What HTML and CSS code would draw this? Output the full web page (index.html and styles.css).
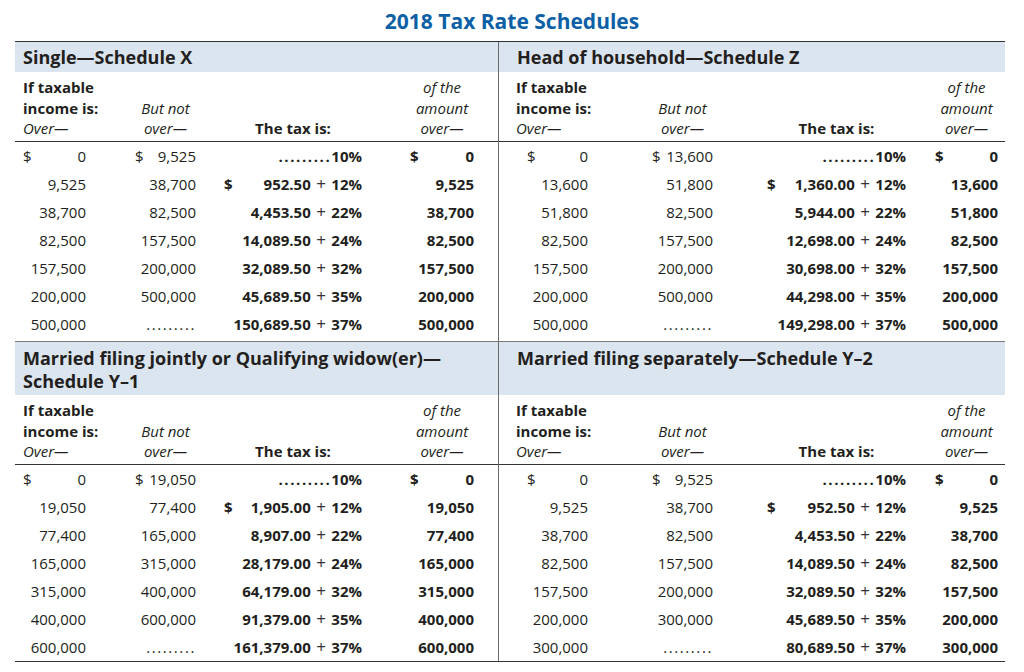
FILE: index.html
```html
<!DOCTYPE html>
<html lang="en">
<head>
<meta charset="utf-8">
<title>2018 Tax Rate Schedules</title>
<link rel="stylesheet" href="styles.css">
</head>
<body>
<h1 class="title">2018 Tax Rate Schedules</h1>
<div class="schedules">

  <section class="sched left upper">
    <h2 class="band">Single—Schedule X</h2>
    <div class="grid heads">
      <div class="h c1"><b>If taxable<br>income is:</b><br><i>Over—</i></div>
      <div class="h c2"><i>But not<br>over—</i></div>
      <div class="h c3"><b>The tax is:</b></div>
      <div class="h c4"><i>of the<br>amount<br>over—</i></div>
    </div>
    <div class="grid rows">
      <div class="n c1"><span>$</span><span class="v">0</span></div>
      <div class="n c2"><span>$</span><span class="v">9,525</span></div>
      <div class="n c3 b"><span class="v"><span class="dots">.........</span>10%</span></div>
      <div class="n c4 b"><span>$</span><span class="v">0</span></div>

      <div class="n c1"><span class="v">9,525</span></div>
      <div class="n c2"><span class="v">38,700</span></div>
      <div class="n c3 b"><span>$</span><span class="v">952.50<span class="op"> + </span>12%</span></div>
      <div class="n c4 b"><span class="v">9,525</span></div>

      <div class="n c1"><span class="v">38,700</span></div>
      <div class="n c2"><span class="v">82,500</span></div>
      <div class="n c3 b"><span class="v">4,453.50<span class="op"> + </span>22%</span></div>
      <div class="n c4 b"><span class="v">38,700</span></div>

      <div class="n c1"><span class="v">82,500</span></div>
      <div class="n c2"><span class="v">157,500</span></div>
      <div class="n c3 b"><span class="v">14,089.50<span class="op"> + </span>24%</span></div>
      <div class="n c4 b"><span class="v">82,500</span></div>

      <div class="n c1"><span class="v">157,500</span></div>
      <div class="n c2"><span class="v">200,000</span></div>
      <div class="n c3 b"><span class="v">32,089.50<span class="op"> + </span>32%</span></div>
      <div class="n c4 b"><span class="v">157,500</span></div>

      <div class="n c1"><span class="v">200,000</span></div>
      <div class="n c2"><span class="v">500,000</span></div>
      <div class="n c3 b"><span class="v">45,689.50<span class="op"> + </span>35%</span></div>
      <div class="n c4 b"><span class="v">200,000</span></div>

      <div class="n c1"><span class="v">500,000</span></div>
      <div class="n c2"><span class="v dots">.........</span></div>
      <div class="n c3 b"><span class="v">150,689.50<span class="op"> + </span>37%</span></div>
      <div class="n c4 b"><span class="v">500,000</span></div>
    </div>
  </section>

  <section class="sched right upper">
    <h2 class="band">Head of household—Schedule Z</h2>
    <div class="grid heads">
      <div class="h c1"><b>If taxable<br>income is:</b><br><i>Over—</i></div>
      <div class="h c2"><i>But not<br>over—</i></div>
      <div class="h c3"><b>The tax is:</b></div>
      <div class="h c4"><i>of the<br>amount<br>over—</i></div>
    </div>
    <div class="grid rows">
      <div class="n c1"><span>$</span><span class="v">0</span></div>
      <div class="n c2"><span>$</span><span class="v">13,600</span></div>
      <div class="n c3 b"><span class="v"><span class="dots">.........</span>10%</span></div>
      <div class="n c4 b"><span>$</span><span class="v">0</span></div>

      <div class="n c1"><span class="v">13,600</span></div>
      <div class="n c2"><span class="v">51,800</span></div>
      <div class="n c3 b"><span>$</span><span class="v">1,360.00<span class="op"> + </span>12%</span></div>
      <div class="n c4 b"><span class="v">13,600</span></div>

      <div class="n c1"><span class="v">51,800</span></div>
      <div class="n c2"><span class="v">82,500</span></div>
      <div class="n c3 b"><span class="v">5,944.00<span class="op"> + </span>22%</span></div>
      <div class="n c4 b"><span class="v">51,800</span></div>

      <div class="n c1"><span class="v">82,500</span></div>
      <div class="n c2"><span class="v">157,500</span></div>
      <div class="n c3 b"><span class="v">12,698.00<span class="op"> + </span>24%</span></div>
      <div class="n c4 b"><span class="v">82,500</span></div>

      <div class="n c1"><span class="v">157,500</span></div>
      <div class="n c2"><span class="v">200,000</span></div>
      <div class="n c3 b"><span class="v">30,698.00<span class="op"> + </span>32%</span></div>
      <div class="n c4 b"><span class="v">157,500</span></div>

      <div class="n c1"><span class="v">200,000</span></div>
      <div class="n c2"><span class="v">500,000</span></div>
      <div class="n c3 b"><span class="v">44,298.00<span class="op"> + </span>35%</span></div>
      <div class="n c4 b"><span class="v">200,000</span></div>

      <div class="n c1"><span class="v">500,000</span></div>
      <div class="n c2"><span class="v dots">.........</span></div>
      <div class="n c3 b"><span class="v">149,298.00<span class="op"> + </span>37%</span></div>
      <div class="n c4 b"><span class="v">500,000</span></div>
    </div>
  </section>

  <section class="sched left lower">
    <h2 class="band">Married filing jointly or Qualifying widow(er)—<br>Schedule Y–1</h2>
    <div class="grid heads">
      <div class="h c1"><b>If taxable<br>income is:</b><br><i>Over—</i></div>
      <div class="h c2"><i>But not<br>over—</i></div>
      <div class="h c3"><b>The tax is:</b></div>
      <div class="h c4"><i>of the<br>amount<br>over—</i></div>
    </div>
    <div class="grid rows">
      <div class="n c1"><span>$</span><span class="v">0</span></div>
      <div class="n c2"><span>$</span><span class="v">19,050</span></div>
      <div class="n c3 b"><span class="v"><span class="dots">.........</span>10%</span></div>
      <div class="n c4 b"><span>$</span><span class="v">0</span></div>

      <div class="n c1"><span class="v">19,050</span></div>
      <div class="n c2"><span class="v">77,400</span></div>
      <div class="n c3 b"><span>$</span><span class="v">1,905.00<span class="op"> + </span>12%</span></div>
      <div class="n c4 b"><span class="v">19,050</span></div>

      <div class="n c1"><span class="v">77,400</span></div>
      <div class="n c2"><span class="v">165,000</span></div>
      <div class="n c3 b"><span class="v">8,907.00<span class="op"> + </span>22%</span></div>
      <div class="n c4 b"><span class="v">77,400</span></div>

      <div class="n c1"><span class="v">165,000</span></div>
      <div class="n c2"><span class="v">315,000</span></div>
      <div class="n c3 b"><span class="v">28,179.00<span class="op"> + </span>24%</span></div>
      <div class="n c4 b"><span class="v">165,000</span></div>

      <div class="n c1"><span class="v">315,000</span></div>
      <div class="n c2"><span class="v">400,000</span></div>
      <div class="n c3 b"><span class="v">64,179.00<span class="op"> + </span>32%</span></div>
      <div class="n c4 b"><span class="v">315,000</span></div>

      <div class="n c1"><span class="v">400,000</span></div>
      <div class="n c2"><span class="v">600,000</span></div>
      <div class="n c3 b"><span class="v">91,379.00<span class="op"> + </span>35%</span></div>
      <div class="n c4 b"><span class="v">400,000</span></div>

      <div class="n c1"><span class="v">600,000</span></div>
      <div class="n c2"><span class="v dots">.........</span></div>
      <div class="n c3 b"><span class="v">161,379.00<span class="op"> + </span>37%</span></div>
      <div class="n c4 b"><span class="v">600,000</span></div>
    </div>
  </section>

  <section class="sched right lower">
    <h2 class="band">Married filing separately—Schedule Y–2</h2>
    <div class="grid heads">
      <div class="h c1"><b>If taxable<br>income is:</b><br><i>Over—</i></div>
      <div class="h c2"><i>But not<br>over—</i></div>
      <div class="h c3"><b>The tax is:</b></div>
      <div class="h c4"><i>of the<br>amount<br>over—</i></div>
    </div>
    <div class="grid rows">
      <div class="n c1"><span>$</span><span class="v">0</span></div>
      <div class="n c2"><span>$</span><span class="v">9,525</span></div>
      <div class="n c3 b"><span class="v"><span class="dots">.........</span>10%</span></div>
      <div class="n c4 b"><span>$</span><span class="v">0</span></div>

      <div class="n c1"><span class="v">9,525</span></div>
      <div class="n c2"><span class="v">38,700</span></div>
      <div class="n c3 b"><span>$</span><span class="v">952.50<span class="op"> + </span>12%</span></div>
      <div class="n c4 b"><span class="v">9,525</span></div>

      <div class="n c1"><span class="v">38,700</span></div>
      <div class="n c2"><span class="v">82,500</span></div>
      <div class="n c3 b"><span class="v">4,453.50<span class="op"> + </span>22%</span></div>
      <div class="n c4 b"><span class="v">38,700</span></div>

      <div class="n c1"><span class="v">82,500</span></div>
      <div class="n c2"><span class="v">157,500</span></div>
      <div class="n c3 b"><span class="v">14,089.50<span class="op"> + </span>24%</span></div>
      <div class="n c4 b"><span class="v">82,500</span></div>

      <div class="n c1"><span class="v">157,500</span></div>
      <div class="n c2"><span class="v">200,000</span></div>
      <div class="n c3 b"><span class="v">32,089.50<span class="op"> + </span>32%</span></div>
      <div class="n c4 b"><span class="v">157,500</span></div>

      <div class="n c1"><span class="v">200,000</span></div>
      <div class="n c2"><span class="v">300,000</span></div>
      <div class="n c3 b"><span class="v">45,689.50<span class="op"> + </span>35%</span></div>
      <div class="n c4 b"><span class="v">200,000</span></div>

      <div class="n c1"><span class="v">300,000</span></div>
      <div class="n c2"><span class="v dots">.........</span></div>
      <div class="n c3 b"><span class="v">80,689.50<span class="op"> + </span>37%</span></div>
      <div class="n c4 b"><span class="v">300,000</span></div>
    </div>
  </section>

</div>
</body>
</html>
```
FILE: styles.css
```css
html, body {
  margin: 0;
  padding: 0;
  background: #ffffff;
}

body {
  font-family: "Open Sans", "Noto Sans", sans-serif;
  color: #231f20;
}

.title {
  margin: 0;
  height: 41px;
  line-height: 43px;
  text-align: center;
  font-size: 21px;
  font-weight: 700;
  color: #0d5fa6;
}

.schedules {
  display: grid;
  grid-template-columns: 483px 507px;
  width: 990px;
  margin-left: 15px;
  border-top: 1px solid #333333;
  border-bottom: 1px solid #333333;
}

.sched {
  display: flex;
  flex-direction: column;
}

.sched.right {
  border-left: 1px solid #6b6b6b;
}

.sched.lower {
  border-top: 1px solid #7a7a7a;
}

.band {
  margin: 0;
  background: #dbe5ef;
  font-size: 18px;
  font-weight: 700;
  height: 30px;
  line-height: 30px;
  white-space: nowrap;
}

.lower .band {
  box-sizing: border-box;
  height: 53px;
  line-height: 23px;
  padding-top: 4.5px;
}

.left .band {
  padding-left: 8px;
}

.right .band {
  padding-left: 18px;
}

.grid {
  display: grid;
  font-size: 15px;
}

.left .grid {
  grid-template-columns: 63px 110px 166px 112px;
  padding-left: 8px;
}

.right .grid {
  grid-template-columns: 72px 125px 193px 92px;
  padding-left: 17px;
}

.heads {
  box-sizing: border-box;
  height: 70px;
  align-items: end;
  padding-top: 5px;
  padding-bottom: 2.5px;
  border-bottom: 1px solid #333333;
  line-height: 20.5px;
}

.h {
  white-space: nowrap;
}

.h b {
  font-weight: 700;
}

.h i {
  font-style: italic;
}

.h.c2,
.h.c3,
.h.c4 {
  text-align: center;
}

.rows {
  grid-auto-rows: 28px;
  line-height: 28px;
}

.upper .rows {
  padding-bottom: 3px;
}

.n {
  display: flex;
  white-space: nowrap;
}

.n .v {
  margin-left: auto;
}

.n.b {
  font-weight: 700;
}

.op {
  font-size: 17px;
  font-weight: 400;
  line-height: 1;
  padding: 0 1px;
  color: #333333;
}

.dots {
  letter-spacing: 1.6px;
}

.left .c2 {
  padding-left: 49px;
}

.left .c3 {
  padding-left: 28px;
}

.left .c4 {
  padding-left: 48px;
}

.right .rows .c1 {
  padding-left: 11px;
}

.right .c2 {
  padding-left: 64px;
}

.right .c3 {
  padding-left: 54px;
}

.right .c4 {
  padding-left: 29px;
}
```
